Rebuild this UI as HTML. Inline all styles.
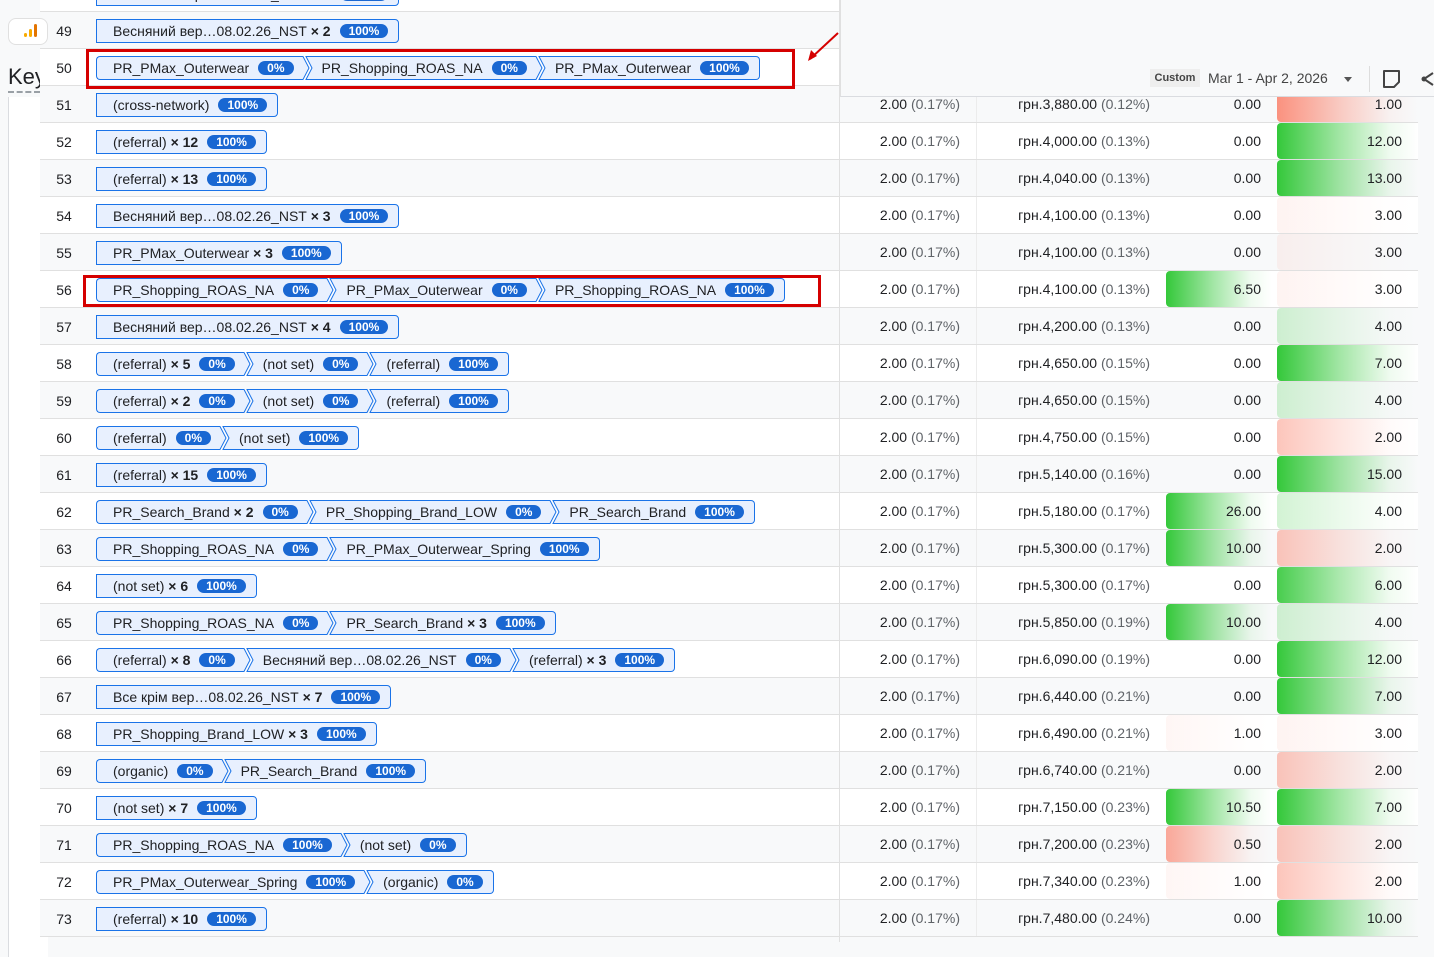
<!DOCTYPE html>
<html><head><meta charset="utf-8">
<style>
*{box-sizing:border-box;margin:0;padding:0}
body{width:1434px;height:942px;overflow:hidden;background:#f8f9fa;font-family:"Liberation Sans",Roboto,Arial,sans-serif;color:#202124;position:relative;font-size:14px}
.leftpanel{position:absolute;left:8px;top:97px;width:40px;height:860px;background:#fff;border-left:1px solid #dadce0}
.row{position:absolute;left:40px;width:1378px;height:37px;border-bottom:1px solid #e0e0e0}
.row.odd{background:#f8f9fa}.row.even{background:#fff}
.num{position:absolute;left:0;width:48px;text-align:center;top:11px;font-size:14px}
.chip{position:absolute;left:56px;top:7px;height:24px;display:flex;align-items:stretch}
.seg{display:flex;align-items:center;background:#e8f0fe;border-top:1px solid #1a73e8;border-bottom:1px solid #1a73e8;height:24px;white-space:nowrap;font-size:14px;color:#202124}
.seg.first{border-left:1px solid #1a73e8;border-radius:4px 0 0 4px;padding-left:16px}
.seg.last{border-right:1px solid #1a73e8;border-radius:0 4px 4px 0;padding-right:10px}
.seg.mid{padding-left:4px}
.badge{display:inline-block;background:#1967d2;color:#fff;font-weight:bold;font-size:12px;line-height:14px;height:14px;border-radius:7px;padding:0 9px;margin-left:9px}
.conn{width:20px;height:24px;display:block}
.sep{position:absolute;left:799px;top:0;width:1px;height:37px;background:#e0e0e0}
.c1,.c2,.c3,.c4{position:absolute;top:0;height:36px;line-height:37px;text-align:right;font-size:14px}
.c1{left:800px;width:120px}
.c2{left:936px;width:174px;border-left:1px solid #ececec;padding-right:0}
.c3{left:1126px;width:106px;padding-right:11px;border-radius:4px}
.c4{left:1237px;width:141px;padding-right:16px;border-radius:4px}
.g{color:#5f6368}
.red{position:absolute;border:3px solid #d50000}
.hdr{position:absolute;left:840px;top:0;width:594px;height:97px;background:#f8f9fa;border-bottom:1px solid #dadce0;border-left:1px solid #e0e0e0}
</style></head><body>
<div class="leftpanel"></div>
<div id="rows"></div>
<div style="position:absolute;left:839px;top:0;width:1px;height:942px;background:#e0e0e0"></div>
<div class="hdr">
 <div style="position:absolute;left:309px;top:69px;width:50px;height:18px;background:#eeeeee;font-size:11px;font-weight:bold;color:#444;line-height:18px;text-align:center">Custom</div>
 <div style="position:absolute;left:367px;top:70px;font-size:14px;color:#444">Mar 1 - Apr 2, 2026</div>
 <div style="position:absolute;left:503px;top:77px;width:0;height:0;border-left:4px solid transparent;border-right:4px solid transparent;border-top:5px solid #555"></div>
 <div style="position:absolute;left:528px;top:66px;width:1px;height:26px;background:#ddd"></div>
 <svg style="position:absolute;left:540px;top:68px" width="22" height="22" viewBox="0 0 22 22"><path d="M3 3h15v11l-5 5H3z" fill="none" stroke="#444" stroke-width="2" stroke-linejoin="round"/></svg>
 <svg style="position:absolute;left:580px;top:70px" width="14" height="18" viewBox="0 0 14 18"><path d="M12 3L3 9l9 6" fill="none" stroke="#444" stroke-width="2"/><circle cx="3" cy="9" r="2.5" fill="#444"/></svg>
</div>
<div style="position:absolute;left:8px;top:18px;width:40px;height:27px;background:#fff;border:1px solid #e0e0e0;border-radius:8px"></div>
<svg style="position:absolute;left:22px;top:23px" width="18" height="16"><rect x="2" y="10" width="3" height="4" rx="1.5" fill="#f9ab00"/><rect x="7" y="6" width="3" height="8" rx="1.5" fill="#f9ab00"/><rect x="12" y="1" width="3" height="13" rx="1.5" fill="#e37400"/></svg>
<div style="position:absolute;left:8px;top:64px;font-size:22px;color:#202124;width:32px;overflow:hidden;white-space:nowrap">Key</div>
<div style="position:absolute;left:8px;top:91px;width:32px;border-top:2px dashed #9aa0a6"></div>
<div class="red" style="left:86px;top:49px;width:709px;height:40px"></div>
<div class="red" style="left:83px;top:275px;width:738px;height:32px"></div>
<svg style="position:absolute;left:800px;top:30px" width="42" height="36"><path d="M38 3L10 29" stroke="#d50000" stroke-width="2"/><path d="M8 31l3-11 6 6z" fill="#d50000"/></svg>
<script>
var R=[
[48,[["Весняний вер…08.02.26_NST","× 1","100%"]]],
[49,[["Весняний вер…08.02.26_NST","× 2","100%"]]],
[50,[["PR_PMax_Outerwear","","0%"],["PR_Shopping_ROAS_NA","","0%"],["PR_PMax_Outerwear","","100%"]]],
[51,[["(cross-network)","","100%"]],"3,880.00","0.12","0.00","1.00"],
[52,[["(referral)","× 12","100%"]],"4,000.00","0.13","0.00","12.00"],
[53,[["(referral)","× 13","100%"]],"4,040.00","0.13","0.00","13.00"],
[54,[["Весняний вер…08.02.26_NST","× 3","100%"]],"4,100.00","0.13","0.00","3.00"],
[55,[["PR_PMax_Outerwear","× 3","100%"]],"4,100.00","0.13","0.00","3.00"],
[56,[["PR_Shopping_ROAS_NA","","0%"],["PR_PMax_Outerwear","","0%"],["PR_Shopping_ROAS_NA","","100%"]],"4,100.00","0.13","6.50","3.00"],
[57,[["Весняний вер…08.02.26_NST","× 4","100%"]],"4,200.00","0.13","0.00","4.00"],
[58,[["(referral)","× 5","0%"],["(not set)","","0%"],["(referral)","","100%"]],"4,650.00","0.15","0.00","7.00"],
[59,[["(referral)","× 2","0%"],["(not set)","","0%"],["(referral)","","100%"]],"4,650.00","0.15","0.00","4.00"],
[60,[["(referral)","","0%"],["(not set)","","100%"]],"4,750.00","0.15","0.00","2.00"],
[61,[["(referral)","× 15","100%"]],"5,140.00","0.16","0.00","15.00"],
[62,[["PR_Search_Brand","× 2","0%"],["PR_Shopping_Brand_LOW","","0%"],["PR_Search_Brand","","100%"]],"5,180.00","0.17","26.00","4.00"],
[63,[["PR_Shopping_ROAS_NA","","0%"],["PR_PMax_Outerwear_Spring","","100%"]],"5,300.00","0.17","10.00","2.00"],
[64,[["(not set)","× 6","100%"]],"5,300.00","0.17","0.00","6.00"],
[65,[["PR_Shopping_ROAS_NA","","0%"],["PR_Search_Brand","× 3","100%"]],"5,850.00","0.19","10.00","4.00"],
[66,[["(referral)","× 8","0%"],["Весняний вер…08.02.26_NST","","0%"],["(referral)","× 3","100%"]],"6,090.00","0.19","0.00","12.00"],
[67,[["Все крім вер…08.02.26_NST","× 7","100%"]],"6,440.00","0.21","0.00","7.00"],
[68,[["PR_Shopping_Brand_LOW","× 3","100%"]],"6,490.00","0.21","1.00","3.00"],
[69,[["(organic)","","0%"],["PR_Search_Brand","","100%"]],"6,740.00","0.21","0.00","2.00"],
[70,[["(not set)","× 7","100%"]],"7,150.00","0.23","10.50","7.00"],
[71,[["PR_Shopping_ROAS_NA","","100%"],["(not set)","","0%"]],"7,200.00","0.23","0.50","2.00"],
[72,[["PR_PMax_Outerwear_Spring","","100%"],["(organic)","","0%"]],"7,340.00","0.23","1.00","2.00"],
[73,[["(referral)","× 10","100%"]],"7,480.00","0.24","0.00","10.00"]
];
function heat(v,col){
 v=parseFloat(v);var c,a;
 if(col==3){ if(v>=6){c="52,200,58";a=1}else if(v==0.5){c="250,140,120";a=.75}else if(v==1){c="250,140,120";a=.08}else return "";}
 else{
  if(v>=7){c="52,200,58";a=1}else if(v>=6){c="52,200,58";a=.9}else if(v>=4){c="52,200,58";a=.22}
  else if(v>=3){c="250,140,120";a=.1}else if(v>=2){c="250,140,120";a=.5}else{c="250,140,120";a=.95}
 }
 return "background:linear-gradient(90deg,rgba("+c+","+a+") 0%,rgba("+c+","+(a*0.45)+") 45%,rgba("+c+","+(a*0.08)+") 80%,rgba("+c+",0) 100%)";
}
var conn='<svg class="conn" viewBox="0 0 20 24"><path d="M0 0.5H5L11 12L5 23.5H0Z" fill="#e8f0fe"/><path d="M0 0.5H5L11 12L5 23.5H0" fill="none" stroke="#1a73e8"/><path d="M20 0.5H8L14 12L8 23.5H20Z" fill="#e8f0fe"/><path d="M20 0.5H8L14 12L8 23.5H20" fill="none" stroke="#1a73e8"/></svg>';
var h="";
R.forEach(function(r){
 var n=r[0],y=12+(n-49)*37;if(n==48)y=-25;
 var cls=(n%2)?"odd":"even";
 h+='<div class="row '+cls+'" style="top:'+y+'px">';
 h+='<div class="num">'+n+'</div><div class="chip">';
 r[1].forEach(function(s,i){
  var k="seg"+(i==0?" first":" mid")+(i==r[1].length-1?" last":"");
  if(i>0)h+=conn;
  h+='<div class="'+k+'" style="'+(i<r[1].length-1?'padding-right:4px':'')+'">'+s[0]+(s[1]?'&nbsp;<b>'+s[1]+'</b>':'')+'<span class="badge">'+s[2]+'</span></div>';
 });
 h+='</div><div class="sep"></div>';
 if(r[2]){
  h+='<div class="c1">2.00 <span class="g">(0.17%)</span></div>';
  h+='<div class="c2">грн.'+r[2]+' <span class="g">('+r[3]+'%)</span></div>';
  h+='<div class="c3" style="'+heat(r[4],3)+'">'+r[4]+'</div>';
  h+='<div class="c4" style="'+heat(r[5],4)+'">'+r[5]+'</div>';
 }
 h+='</div>';
});
document.getElementById("rows").innerHTML=h;
</script>
</body></html>
